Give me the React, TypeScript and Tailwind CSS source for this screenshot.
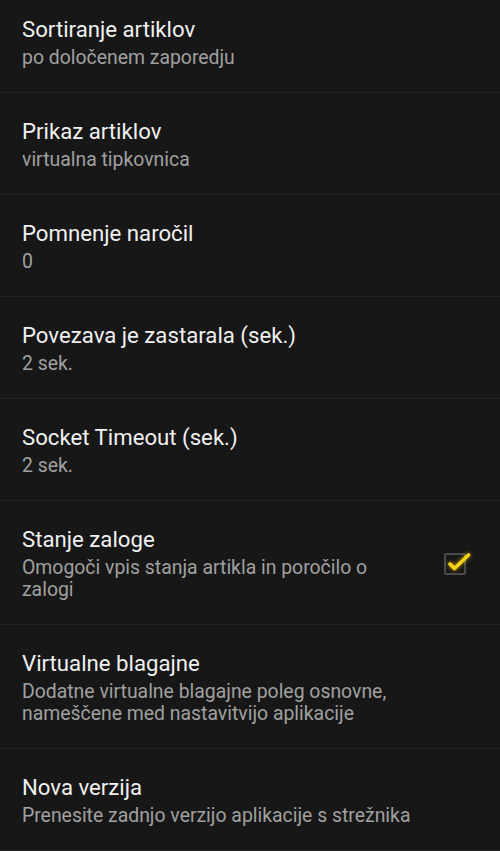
import React from "react";

type Item = { title: string; sub: string; check?: boolean };

const items: Item[] = [
  { title: "Sortiranje artiklov", sub: "po določenem zaporedju" },
  { title: "Prikaz artiklov", sub: "virtualna tipkovnica" },
  { title: "Pomnenje naročil", sub: "0" },
  { title: "Povezava je zastarala (sek.)", sub: "2 sek." },
  { title: "Socket Timeout (sek.)", sub: "2 sek." },
  { title: "Stanje zaloge", sub: "Omogoči vpis stanja artikla in poročilo o zalogi", check: true },
  { title: "Virtualne blagajne", sub: "Dodatne virtualne blagajne poleg osnovne, nameščene med nastavitvijo aplikacije" },
  { title: "Nova verzija", sub: "Prenesite zadnjo verzijo aplikacije s strežnika" },
];

function Check() {
  return (
    <div className="relative w-[22px] h-[22px] shrink-0 rounded-[2px] border-2 border-[#4a4a4a]">
      <svg
        className="absolute left-[1px] top-[-5px]"
        width="26"
        height="24"
        viewBox="0 0 26 24"
        style={{ filter: "drop-shadow(0 0 2px rgba(255,214,0,0.7))" }}
      >
        <path d="M3 14 L7.5 18.5 L21.5 5" fill="none" stroke="#f7d21a" strokeWidth="3.6" strokeLinecap="round" strokeLinejoin="round" />
      </svg>
    </div>
  );
}

export default function App() {
  return (
    <div className="w-[500px] h-[851px] overflow-hidden bg-[#171717]" style={{ fontFamily: "Roboto, 'Noto Sans', sans-serif" }}>
      <div className="-mt-[9px]">
        {items.map((it) => (
          <div key={it.title} className="flex items-center border-b border-[#222222] pl-[22px] pr-[34px] pt-[25px] pb-[23px]">
            <div className={it.check ? "flex-1 pr-[40px]" : "flex-1"}>
              <div className="text-[22.2px] leading-[26px] text-[#f0f0f0]">{it.title}</div>
              <div className="mt-[5px] text-[19.4px] leading-[22px] text-[#a0a0a0]">{it.sub}</div>
            </div>
            {it.check && <Check />}
          </div>
        ))}
      </div>
    </div>
  );
}
